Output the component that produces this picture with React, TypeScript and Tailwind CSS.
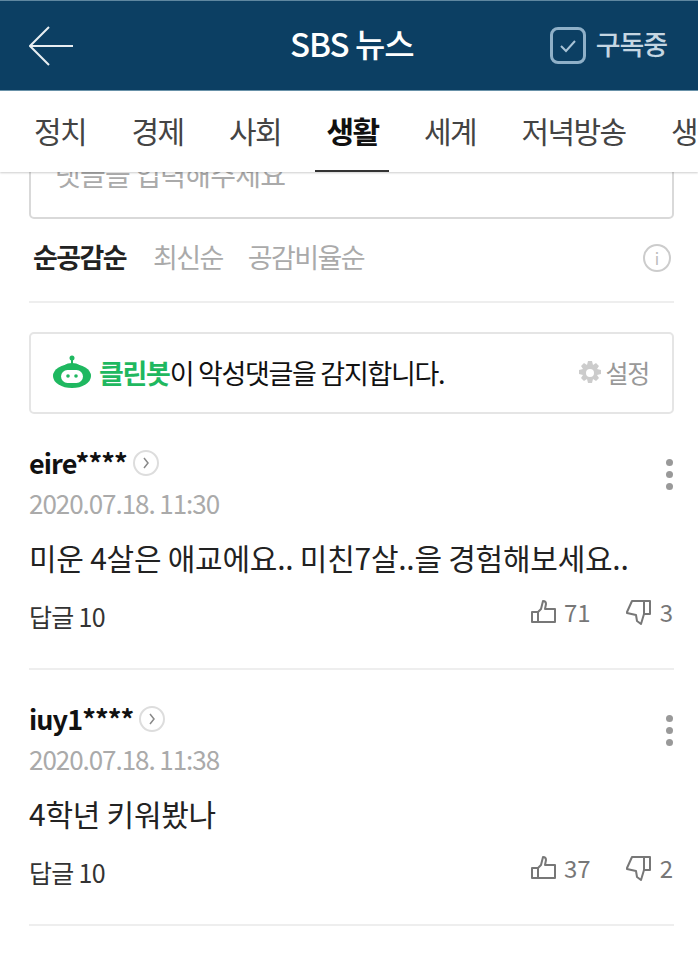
const font = { fontFamily: '"Noto Sans CJK KR", "Noto Sans", sans-serif' };

const tabs = [
  { label: '정치', active: false, width: 'w-[52px]' },
  { label: '경제', active: false, width: 'w-[52px]' },
  { label: '사회', active: false, width: 'w-[52px]' },
  { label: '생활', active: true, width: 'w-[52px]' },
  { label: '세계', active: false, width: 'w-[52px]' },
  { label: '저녁방송', active: false, width: 'w-[104px]' },
  { label: '생활', active: false, width: 'w-[52px]' },
];

const comments = [
  { id: 'eire****', date: '2020.07.18. 11:30', body: '미운 4살은 애교에요.. 미친7살..을 경험해보세요..', up: 71, down: 3 },
  { id: 'iuy1****', date: '2020.07.18. 11:38', body: '4학년 키워봤나', up: 37, down: 2 },
];

function ThumbUp() {
  return (
    <svg width="25" height="24" viewBox="0 0 25 24" fill="none" stroke="#777" strokeWidth="2" strokeLinejoin="round">
      <path d="M1 12h6v10H1z" />
      <path d="M7 12l3-3 2-8c2 0 3 1 3 3l-1 5h10v13H7" />
    </svg>
  );
}

function ThumbDown() {
  return (
    <svg width="25" height="25" viewBox="0 0 25 25" fill="none" stroke="#777" strokeWidth="2" strokeLinejoin="round">
      <path d="M18 1h6v13h-6z" />
      <path d="M18 1H6L1 12v1l9 2 1 6 4 3 3-10" />
    </svg>
  );
}

function Comment({ id, date, body, up, down }: { id: string; date: string; body: string; up: number; down: number }) {
  return (
    <div className="relative h-[256px] border-b-2 border-[#eeeeee]">
      <div className="flex items-center pt-[30px] h-[68px]">
        <span className="text-[27px] leading-[32px] font-bold text-[#111] tracking-[-0.9px]">{id}</span>
        <span className="ml-[6px] flex h-[26px] w-[26px] items-center justify-center rounded-full border-2 border-[#ddd]">
          <svg width="8" height="12" viewBox="0 0 8 12" fill="none" stroke="#888" strokeWidth="1.5">
            <path d="M2 1l4 5-4 5" />
          </svg>
        </span>
      </div>
      <div className="absolute right-[1px] top-[45px] flex w-[7px] flex-col gap-[5px]">
        <span className="h-[7px] w-[7px] rounded-full bg-[#999]" />
        <span className="h-[7px] w-[7px] rounded-full bg-[#999]" />
        <span className="h-[7px] w-[7px] rounded-full bg-[#999]" />
      </div>
      <div className="mt-[5px] text-[26px] leading-[32px] text-[#aaa] tracking-[-1.05px]">{date}</div>
      <div className="mt-[17px] text-[30px] leading-[42px] text-[#222] tracking-[-0.25px] whitespace-nowrap">{body}</div>
      <div className="mt-[18px] flex items-center justify-between">
        <span className="text-[25px] leading-[32px] text-[#333] tracking-[-0.7px]">답글 10</span>
        <div className="mb-[8px] flex items-center pr-[1px] text-[24px] leading-[32px] text-[#777]">
          <ThumbUp />
          <span className="ml-[8px]">{up}</span>
          <span className="ml-[35px]"><ThumbDown /></span>
          <span className="ml-[9px]">{down}</span>
        </div>
      </div>
    </div>
  );
}

export default function App() {
  return (
    <div className="h-[960px] w-[698px] overflow-hidden bg-white flex flex-col" style={font}>
      <header className="h-[91px] shrink-0 flex items-center justify-between bg-[#0c3f63] border-t border-[#5f87a0] border-b border-b-[#6a93aa] pl-[29px] pr-[31px] relative">
        <svg width="44" height="40" viewBox="0 0 44 40" fill="none" stroke="#e8eef2" strokeWidth="2">
          <path d="M20 1L1 20l19 19M1 20h43" />
        </svg>
        <span className="absolute left-[290px] top-[19px] text-[33px] leading-[46px] font-medium text-white tracking-[-1px]">SBS 뉴스</span>
        <div className="flex items-center">
          <span className="flex h-[37px] w-[36px] items-center justify-center rounded-[8px] border-[3px] border-[#8fb0c8]">
            <svg width="20" height="16" viewBox="0 0 20 16" fill="none" stroke="#a9c3d6" strokeWidth="2">
              <path d="M3 8l5 5 9-10" />
            </svg>
          </span>
          <span className="ml-[10px] mb-[3px] text-[27px] leading-[36px] font-medium text-[#c5d6e2] tracking-[-1.1px]">구독중</span>
        </div>
      </header>

      <nav className="relative z-10 h-[81px] shrink-0 flex items-center gap-[45.5px] overflow-hidden bg-white pl-[34px] pb-[2px] shadow-[0_1px_2px_rgba(0,0,0,0.2)]">
        {tabs.map((t, i) => (
          <span
            key={i}
            className={`relative shrink-0 flex h-[81px] items-center justify-center text-[30px] tracking-[-1.6px] ${t.width} ${t.active ? 'font-bold text-[#111]' : 'text-[#444]'}`}
          >
            {t.label}
            {t.active && <span className="absolute bottom-[-1px] left-[-12px] right-[-10px] h-[2px] bg-[#333]" />}
          </span>
        ))}
      </nav>

      <main className="flex-1 overflow-hidden px-[29px] pr-[24px]">
        <div className="mt-[-18px] h-[65px] rounded-[5px] border-2 border-[#d9d9d9] pl-[24px] text-[28px] leading-[36px] text-[#aaa] tracking-[-0.8px]">
          댓글을 입력해주세요
        </div>

        <div className="flex h-[84px] items-center border-b-2 border-[#eeeeee] pb-[5px] pl-[4px] pr-[3px]">
          <span className="text-[27px] font-bold text-[#222] tracking-[-1.6px]">순공감순</span>
          <span className="ml-[27px] text-[27px] text-[#aaa] tracking-[-1.6px]">최신순</span>
          <span className="ml-[25px] text-[27px] text-[#aaa] tracking-[-1.6px]">공감비율순</span>
          <span className="ml-auto flex h-[28px] w-[28px] items-center justify-center rounded-full border-2 border-[#ccc] text-[16px] leading-none text-[#bbb]">i</span>
        </div>

        <div className="mt-[29px] flex h-[82px] items-center justify-between rounded-[5px] border-2 border-[#e5e5e5] pl-[22px] pr-[23px]">
          <div className="flex items-center">
            <svg width="38" height="36" viewBox="0 0 38 36" fill="#1fb860">
              <circle cx="19" cy="3" r="2.5" />
              <rect x="18" y="3" width="2" height="8" />
              <path d="M8 16a11 8 0 0 1 22 0h-22z" />
              <ellipse cx="19" cy="21" rx="19" ry="12" />
              <rect x="8" y="15" width="22" height="13" rx="6.5" fill="#fff" />
              <circle cx="15" cy="21" r="1.8" />
              <circle cx="23" cy="21" r="1.8" />
            </svg>
            <span className="ml-[8px] text-[27px] tracking-[-1.3px] text-[#111]">
              <span className="font-bold text-[#1fb860]">클린봇</span>이 악성댓글을 감지합니다.
            </span>
          </div>
          <div className="flex items-center text-[25px] tracking-[-1.2px] text-[#999]">
            <svg width="24" height="24" viewBox="0 0 24 24" fill="#ccc">
              <path fillRule="evenodd" d="M10 0h4l1 4 3-2 3 3-2 3 4 1v4l-4 1 2 3-3 3-3-2-1 4h-4l-1-4-3 2-3-3 2-3-4-1v-4l4-1-2-3 3-3 3 2zM12 8a4 4 0 1 0 0 8 4 4 0 0 0 0-8z" />
            </svg>
            <span className="ml-[3px]">설정</span>
          </div>
        </div>

        {comments.map((c) => (
          <Comment key={c.id} {...c} />
        ))}
      </main>
    </div>
  );
}
